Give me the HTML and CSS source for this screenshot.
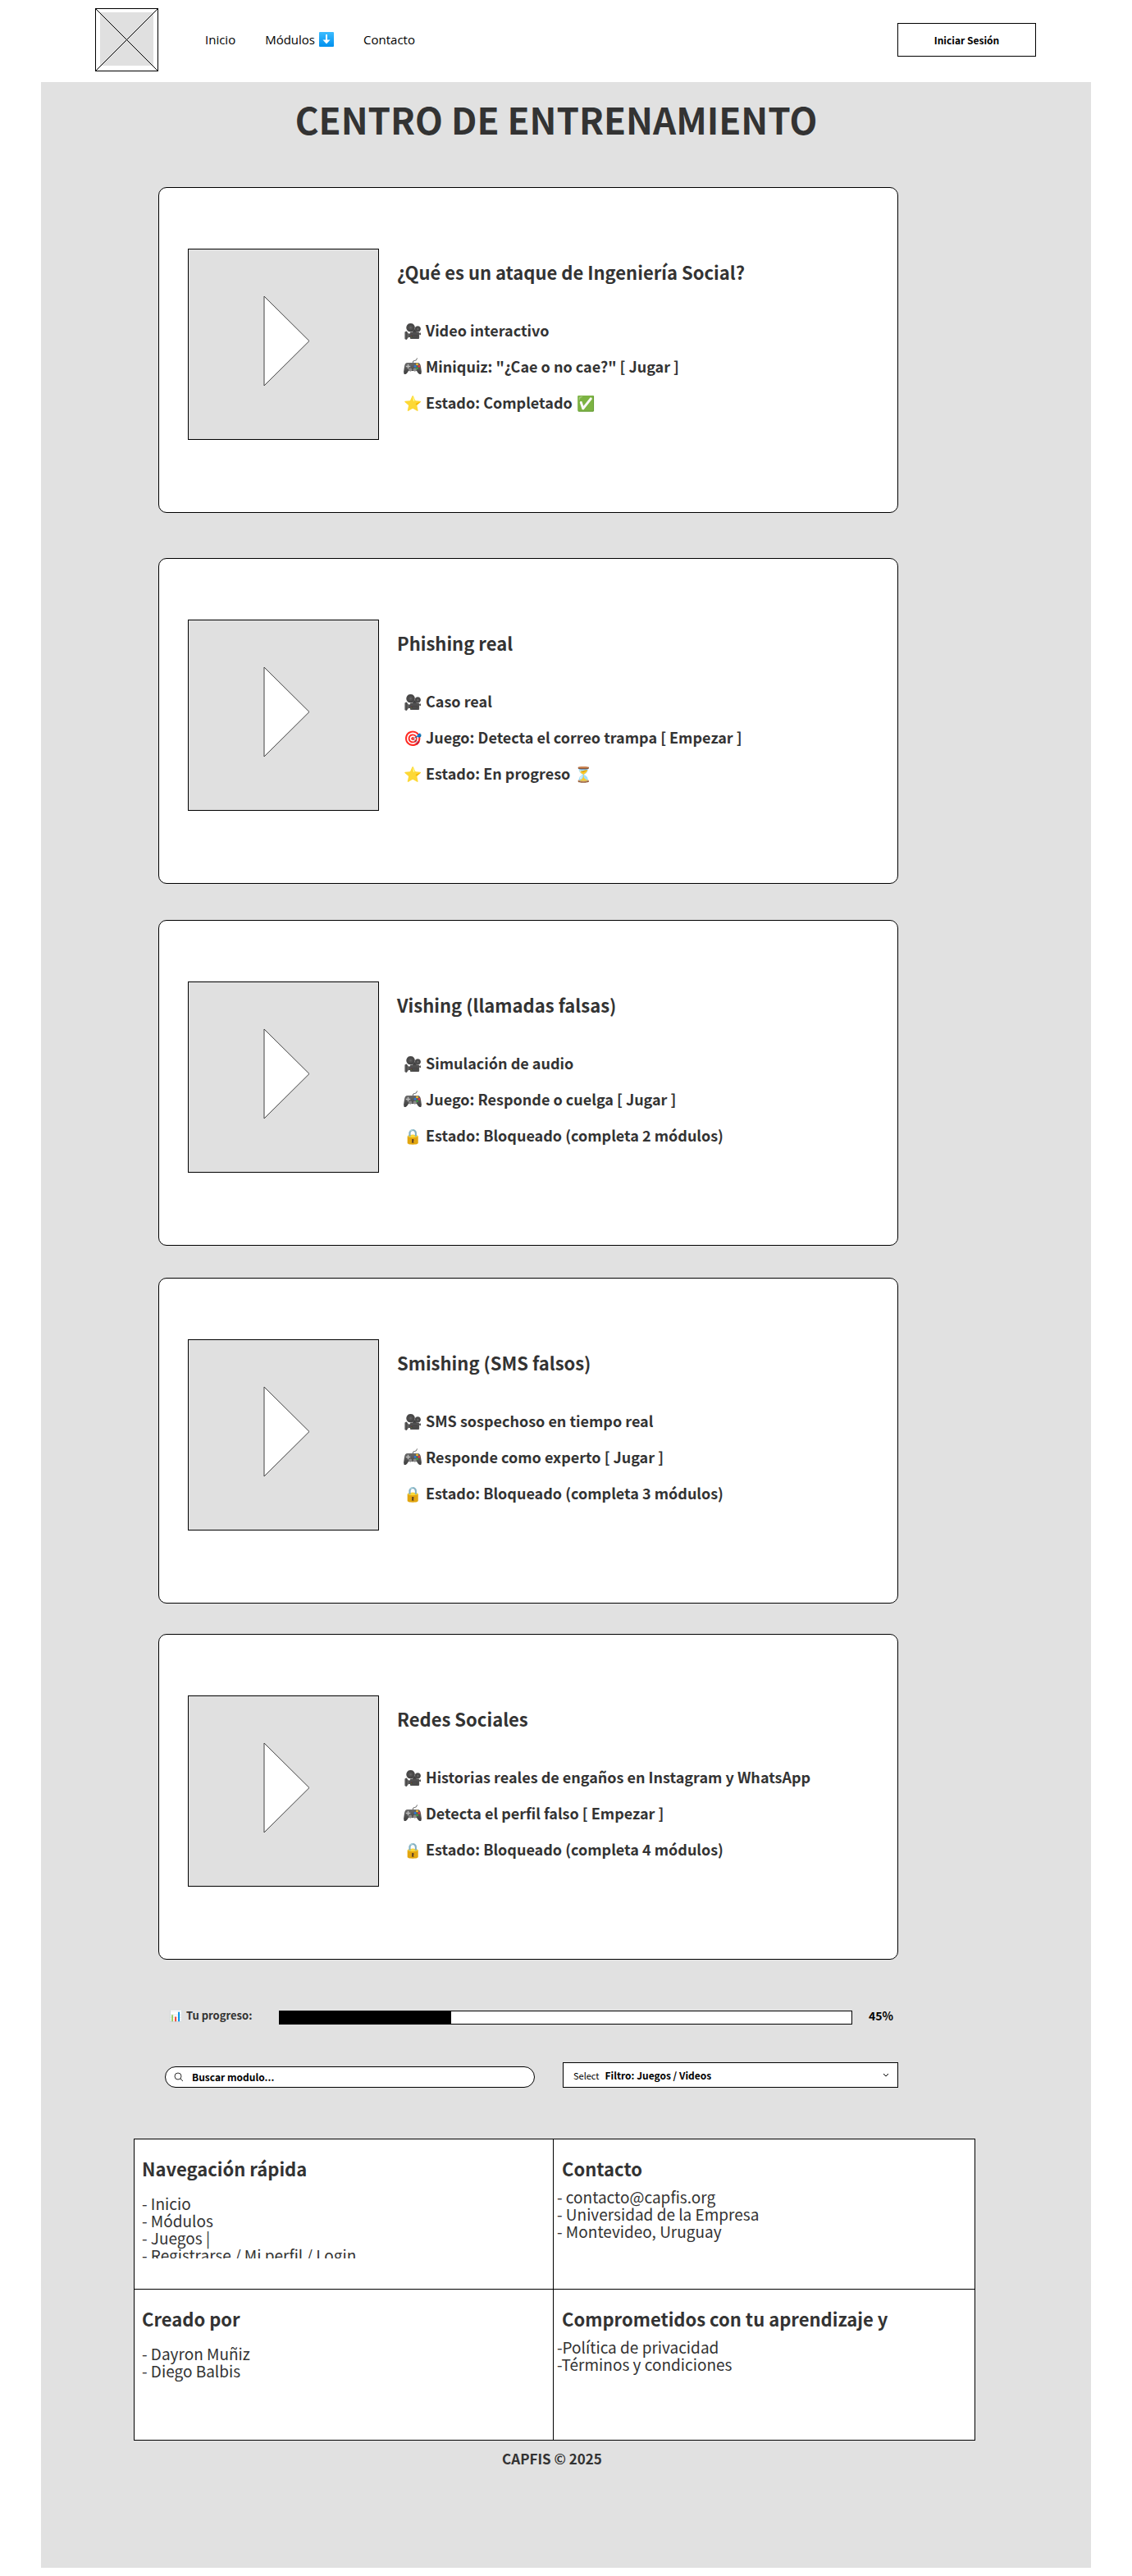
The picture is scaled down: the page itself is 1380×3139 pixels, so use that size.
FILE: index.html
```
<!DOCTYPE html>
<html lang="es">
<head>
<meta charset="utf-8">
<meta name="viewport" content="width=device-width, initial-scale=1">
<title>Centro de Entrenamiento</title>
<link rel="stylesheet" href="styles.css">
</head>
<body>
<svg class="defs" aria-hidden="true">
  <defs>
    <linearGradient id="blue" x1="0" y1="0" x2="0" y2="1">
      <stop offset="0" stop-color="#3cbcff"/><stop offset="1" stop-color="#0090ee"/>
    </linearGradient>
    <linearGradient id="pad" x1="0" y1="0" x2="0" y2="1">
      <stop offset="0" stop-color="#6b6b6b"/><stop offset="1" stop-color="#3c3c3c"/>
    </linearGradient>
    <symbol id="gamepad" viewBox="0 0 24 24">
      <path d="M12.500 8V6.500q0-1.500 2-1.500 3 0 3.500-3.500" fill="none" stroke="#5a5a5a"/>
      <path d="M5 7.500h14q3 0 3.800 4.500l1 7q.4 4-2 4-2 0-4.300-4.500h-11Q4.200 23 2.200 23q-2.400 0-2-4l1-7Q2 7.500 5 7.500z" fill="url(#pad)"/>
      <path d="M6 9.500v6M3 12.500h6" stroke="#bdbdbd" stroke-width="1.500"/>
      <circle cx="9" cy="17" r="2.300" fill="#8a8a8a"/><circle cx="15" cy="17" r="2.300" fill="#8a8a8a"/>
      <circle cx="18" cy="9.800" r="1.500" fill="#fbc02d"/><circle cx="15.400" cy="12.400" r="1.500" fill="#2a7de1"/>
      <circle cx="20.600" cy="12.400" r="1.500" fill="#e53935"/><circle cx="18" cy="15" r="1.500" fill="#43a047"/>
    </symbol>
  </defs>
</svg>
<header class="site-header">
  <svg class="logo" viewBox="0 0 77 77" aria-hidden="true">
    <rect x="6" y="5" width="65" height="65" fill="#e0e0e0"/>
    <rect x=".5" y=".5" width="76" height="76" fill="none" stroke="#000"/>
    <path d="M.5.5l76 76M76.5.5l-76 76" stroke="#000"/>
  </svg>
  <nav class="nav">
    <a href="#inicio">Inicio</a>
    <a class="nav-menu" href="#modulos">Módulos
      <svg viewBox="0 0 18 18" aria-hidden="true"><rect width="18" height="18" rx="1" fill="url(#blue)"/><path d="M8 3h2v6.500h3.500L9 14.500 4.500 9.500H8z" fill="#fff"/></svg>
    </a>
    <a href="#contacto">Contacto</a>
  </nav>
  <button class="login" type="button">Iniciar Sesión</button>
</header>

<main class="page" id="inicio">
  <h1 class="title">CENTRO DE ENTRENAMIENTO</h1>

  <div class="content" id="modulos">
    <article class="card">
      <div class="media"><svg class="play" viewBox="0 0 57 111"><path d="M1 1l55 54.500L1 110z"/></svg></div>
      <div class="info">
        <h2>¿Qué es un ataque de Ingeniería Social?</h2>
        <ul>
          <li><span>🎥</span><span>Video interactivo</span></li>
          <li><svg class="emoji"><use href="#gamepad"/></svg><span>Miniquiz: "¿Cae o no cae?" [ Jugar ]</span></li>
          <li><span>⭐</span><span>Estado: Completado</span><span>✅</span></li>
        </ul>
      </div>
    </article>

    <article class="card">
      <div class="media"><svg class="play" viewBox="0 0 57 111"><path d="M1 1l55 54.500L1 110z"/></svg></div>
      <div class="info">
        <h2>Phishing real</h2>
        <ul>
          <li><span>🎥</span><span>Caso real</span></li>
          <li><span>🎯</span><span>Juego: Detecta el correo trampa [ Empezar ]</span></li>
          <li><span>⭐</span><span>Estado: En progreso</span><span>⏳</span></li>
        </ul>
      </div>
    </article>

    <article class="card">
      <div class="media"><svg class="play" viewBox="0 0 57 111"><path d="M1 1l55 54.500L1 110z"/></svg></div>
      <div class="info">
        <h2>Vishing (llamadas falsas)</h2>
        <ul>
          <li><span>🎥</span><span>Simulación de audio</span></li>
          <li><svg class="emoji"><use href="#gamepad"/></svg><span>Juego: Responde o cuelga [ Jugar ]</span></li>
          <li><span>🔒</span><span>Estado: Bloqueado (completa 2 módulos)</span></li>
        </ul>
      </div>
    </article>

    <article class="card">
      <div class="media"><svg class="play" viewBox="0 0 57 111"><path d="M1 1l55 54.500L1 110z"/></svg></div>
      <div class="info">
        <h2>Smishing (SMS falsos)</h2>
        <ul>
          <li><span>🎥</span><span>SMS sospechoso en tiempo real</span></li>
          <li><svg class="emoji"><use href="#gamepad"/></svg><span>Responde como experto [ Jugar ]</span></li>
          <li><span>🔒</span><span>Estado: Bloqueado (completa 3 módulos)</span></li>
        </ul>
      </div>
    </article>

    <article class="card">
      <div class="media"><svg class="play" viewBox="0 0 57 111"><path d="M1 1l55 54.500L1 110z"/></svg></div>
      <div class="info">
        <h2>Redes Sociales</h2>
        <ul>
          <li><span>🎥</span><span>Historias reales de engaños en Instagram y WhatsApp</span></li>
          <li><svg class="emoji"><use href="#gamepad"/></svg><span>Detecta el perfil falso [ Empezar ]</span></li>
          <li><span>🔒</span><span>Estado: Bloqueado (completa 4 módulos)</span></li>
        </ul>
      </div>
    </article>

    <div class="progress-row">
      <label for="progreso"><span>📊</span><span>Tu progreso:</span></label>
      <progress id="progreso" value="30" max="100"></progress>
      <span class="percent">45%</span>
    </div>

    <form class="filters">
      <label class="search">
        <svg viewBox="0 0 12 12" aria-hidden="true"><circle cx="5" cy="5" r="4"/><path d="M8 8l3 3"/></svg>
        <input type="text" placeholder="Buscar modulo..." aria-label="Buscar modulo">
      </label>
      <div class="select">
        <label for="filtro">Select</label>
        <select id="filtro"><option>Filtro: Juegos / Videos</option></select>
        <svg viewBox="0 0 8 6" aria-hidden="true"><path d="M1 1l3 3 3-3"/></svg>
      </div>
    </form>
  </div>

  <footer class="footer" id="contacto">
    <div class="grid">
      <section class="cell">
        <h3>Navegación rápida</h3>
        <ul class="clipped">
          <li>- <a href="#inicio">Inicio</a></li>
          <li>- <a href="#modulos">Módulos</a></li>
          <li>- <a href="#juegos">Juegos</a> |</li>
          <li>- <a href="#cuenta">Registrarse / Mi perfil / Login</a></li>
        </ul>
      </section>
      <section class="cell cell-right">
        <h3>Contacto</h3>
        <ul>
          <li>- contacto@capfis.org</li>
          <li>- Universidad de la Empresa</li>
          <li>- Montevideo, Uruguay</li>
        </ul>
      </section>
      <section class="cell">
        <h3>Creado por</h3>
        <ul>
          <li>- Dayron Muñiz</li>
          <li>- Diego Balbis</li>
        </ul>
      </section>
      <section class="cell cell-right">
        <h3>Comprometidos con tu aprendizaje y</h3>
        <ul>
          <li>-<a href="#privacidad">Política de privacidad</a></li>
          <li>-<a href="#terminos">Términos y condiciones</a></li>
        </ul>
      </section>
    </div>
    <p class="copyright">CAPFIS © 2025</p>
  </footer>
</main>
</body>
</html>
```
FILE: styles.css
```
* {
  box-sizing: border-box;
}

body {
  margin: 0;
  background: #fff;
  color: #333;
  font-family: "Noto Sans CJK JP", "Noto Sans", sans-serif;
}

h1, h2, h3, p, ul {
  margin: 0;
  padding: 0;
}

ul {
  list-style: none;
}

a {
  color: inherit;
  text-decoration: none;
}

/* Shared gradients and symbols, never laid out */
.defs {
  position: absolute;
  width: 0;
  height: 0;
}

/* Header */
.site-header {
  display: flex;
  align-items: center;
  padding: 10px 117px 13px 116px;
}

.logo {
  width: 77px;
  height: 77px;
}

.nav {
  display: flex;
  gap: 36px;
  margin-left: 57px;
  padding-bottom: 2px;
  color: #000;
  font: 500 15px/24px "Open Sans", sans-serif;
}

.nav-menu {
  display: flex;
  align-items: center;
  gap: 5px;
}

.nav-menu svg {
  width: 18px;
  height: 18px;
}

.login {
  width: 169px;
  height: 41px;
  margin-left: auto;
  padding: 0;
  border: 1px solid #000;
  background: #fff;
  color: #000;
  font: 700 12px/20px "Noto Sans CJK JP", sans-serif;
}

/* Page */
.page {
  margin: 0 50px;
  padding: 13px 0 121px;
  background: #e1e1e1;
}

.title {
  margin-bottom: 51px;
  padding-right: 24px;
  font-size: 44px;
  line-height: 64px;
  text-align: center;
}

.content {
  margin: 0 235px 0 143px;
}

/* Module cards */
.card {
  display: flex;
  align-items: flex-start;
  gap: 22px;
  margin-bottom: 37px;
  padding: 74px 35px 88px;
  border: 1px solid #000;
  border-radius: 10px;
  background: #fff;
}

.card:nth-child(1) {
  margin-bottom: 55px;
}

.card:nth-child(2) {
  margin-bottom: 44px;
}

.card:nth-child(3) {
  margin-bottom: 39px;
}

.media {
  flex: none;
  display: flex;
  width: 233px;
  height: 233px;
  padding: 56px 0 0 91px;
  border: 1px solid #000;
  background: #e0e0e0;
}

.play {
  width: 57px;
  height: 111px;
  fill: #fff;
  stroke: #444;
}

.info {
  padding-top: 12px;
}

.info h2 {
  margin-bottom: 43px;
  font-size: 22px;
  line-height: 32px;
}

.info ul {
  display: grid;
  gap: 20px;
  padding-left: 8px;
}

.info li {
  display: flex;
  align-items: center;
  gap: 5px;
  height: 24px;
  font-size: 18px;
  font-weight: 700;
  line-height: 24px;
}

.emoji {
  width: 22px;
  height: 22px;
}

/* Progress */
.progress-row {
  display: flex;
  align-items: flex-start;
  gap: 20px;
  margin-top: 58px;
  padding-left: 13px;
}

.progress-row label {
  display: flex;
  gap: 5px;
  width: 114px;
  height: 20px;
  font-size: 13px;
  font-weight: 700;
  line-height: 20px;
}

.progress-row progress {
  flex: 1;
  appearance: none;
  height: 17px;
  margin-top: 4px;
  border: 1px solid #000;
  background: #fff;
}

progress::-webkit-progress-bar {
  background: #fff;
}

progress::-webkit-progress-value {
  background: #000;
}

.percent {
  width: 36px;
  color: #000;
  font-size: 14px;
  font-weight: 700;
  line-height: 20px;
}

/* Search and filter */
.filters {
  display: grid;
  grid-template-columns: 451fr 409fr;
  align-items: end;
  gap: 34px;
  margin-top: 46px;
  padding-left: 8px;
}

.search {
  display: flex;
  align-items: center;
  gap: 10px;
  height: 26px;
  padding: 0 10px;
  border: 1px solid #000;
  border-radius: 13px;
  background: #fff;
}

.search svg {
  width: 12px;
  height: 12px;
  fill: none;
  stroke: #333;
}

.search input {
  flex: 1;
  min-width: 0;
  height: 20px;
  padding: 0;
  border: 0;
  outline: 0;
  background: none;
  color: #000;
  font: 700 12px/20px "Noto Sans CJK JP", sans-serif;
}

.search input::placeholder {
  color: #000;
}

.select {
  display: flex;
  align-items: center;
  gap: 7px;
  height: 31px;
  padding: 0 10px 0 12px;
  border: 1px solid #000;
  background: #fff;
  color: #000;
}

.select label {
  font-size: 11px;
  line-height: 20px;
}

.select select {
  flex: 1;
  appearance: none;
  height: 20px;
  padding: 0;
  border: 0;
  background: none;
  color: #000;
  font: 700 12px/20px "Noto Sans CJK JP", sans-serif;
}

.select svg {
  width: 8px;
  height: 6px;
  fill: none;
  stroke: #000;
}

/* Footer */
.footer {
  margin: 62px 141px 0 113px;
}

.grid {
  display: grid;
  grid-template-columns: 511fr 513fr;
  border: 1px solid #000;
  background: #fff;
}

.cell {
  height: 183px;
  padding: 19px 8px 0 9px;
  border-right: 1px solid #000;
}

.cell-right {
  padding-left: 4px;
  border-right: 0;
}

.cell:nth-child(-n+2) {
  border-bottom: 1px solid #000;
}

.cell h3 {
  margin-bottom: 16px;
  font-size: 22px;
  line-height: 32px;
}

.cell-right h3 {
  margin-bottom: 8px;
  padding-left: 6px;
}

.cell li {
  font-size: 19px;
  line-height: 21px;
}

.clipped {
  height: 78px;
  overflow: hidden;
}

.copyright {
  margin-top: 10px;
  padding-right: 6px;
  font-size: 17px;
  font-weight: 700;
  line-height: 24px;
  text-align: center;
}
```
